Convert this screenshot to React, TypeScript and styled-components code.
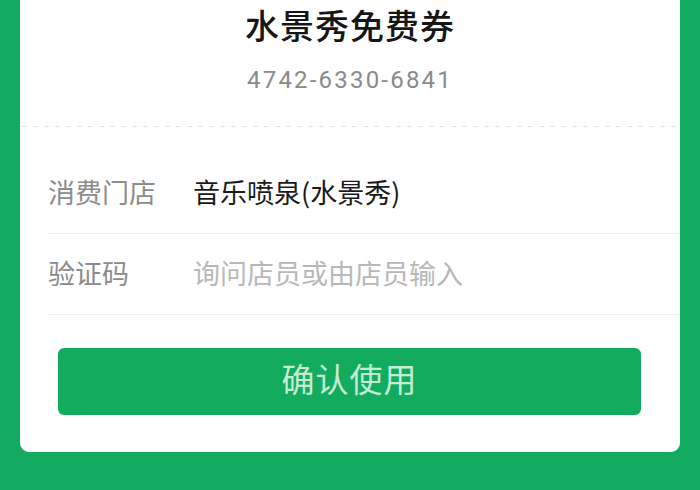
import React from "react";
import styled, { createGlobalStyle } from "styled-components";

const GlobalStyle = createGlobalStyle`
  html, body {
    margin: 0;
    padding: 0;
    background: #12ab5f;
  }
  body {
    font-family: "Noto Sans CJK SC", "Noto Sans", sans-serif;
  }
`;

const Page = styled.div`
  width: 700px;
  height: 490px;
  background: #12ab5f;
  box-sizing: border-box;
  padding: 0 20px;
  overflow: hidden;
`;

const Card = styled.div`
  background: #ffffff;
  border-radius: 0 0 9px 9px;
  display: flex;
  flex-direction: column;
  padding-bottom: 37px;
`;

const Header = styled.div`
  display: flex;
  flex-direction: column;
  align-items: center;
  box-sizing: border-box;
  height: 126px;
  padding-top: 0;
`;

const Title = styled.div`
  font-size: 34px;
  line-height: 50px;
  font-weight: 500;
  color: #161616;
  letter-spacing: 1px;
`;

const Code = styled.div`
  margin-top: 14px;
  font-family: Roboto, "Noto Sans", sans-serif;
  font-size: 24px;
  line-height: 32px;
  color: #8a8a8a;
  letter-spacing: 2.2px;
`;

const DashedLine = styled.div`
  height: 1px;
  margin-left: 2px;
  background-image: repeating-linear-gradient(
    to right,
    #e3e3e3 0,
    #e3e3e3 5px,
    transparent 5px,
    transparent 11px
  );
`;

const Fields = styled.div`
  display: flex;
  flex-direction: column;
  padding: 26px 0 0 28px;
`;

const Row = styled.div`
  display: flex;
  align-items: center;
  box-sizing: border-box;
  height: 81px;
  padding-bottom: 4px;
  border-bottom: 1px solid #ececec;
`;

const Label = styled.div`
  width: 145px;
  flex-shrink: 0;
  font-size: 27px;
  color: #8c8c8c;
`;

const Value = styled.div<{ $placeholder?: boolean }>`
  font-size: 27px;
  color: ${(p) => (p.$placeholder ? "#b8b8b8" : "#1a1a1a")};
`;

const Button = styled.button`
  margin: 33px 39px 0 38px;
  height: 67px;
  border: none;
  border-radius: 6px;
  background: #13ac5f;
  color: #c4ecd3;
  font-family: "Noto Sans CJK SC", "Noto Sans", sans-serif;
  font-size: 33px;
  line-height: 40px;
  letter-spacing: 1px;
  padding: 0 0 7px 0;
`;

export default function App() {
  return (
    <>
      <GlobalStyle />
      <Page>
        <Card>
          <Header>
            <Title>水景秀免费券</Title>
            <Code>4742-6330-6841</Code>
          </Header>
          <DashedLine />
          <Fields>
            <Row>
              <Label>消费门店</Label>
              <Value>音乐喷泉(水景秀)</Value>
            </Row>
            <Row>
              <Label>验证码</Label>
              <Value $placeholder>询问店员或由店员输入</Value>
            </Row>
          </Fields>
          <Button>确认使用</Button>
        </Card>
      </Page>
    </>
  );
}
